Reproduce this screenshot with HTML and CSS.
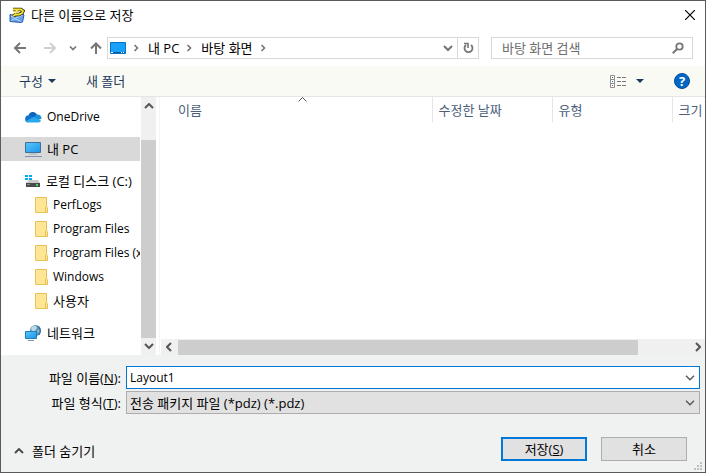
FILE: index.html
```html
<!DOCTYPE html>
<html lang="ko">
<head>
    <meta charset="UTF-8">
    <meta name="viewport" content="width=device-width, initial-scale=1.0">
    <title>다른 이름으로 저장</title>
    <link rel="stylesheet" href="styles.css">
</head>
<body>
    <!-- 공용 아이콘 -->
    <svg class="symbols" aria-hidden="true">
        <symbol id="folder" viewBox="0 0 13 16">
            <path d="M.5.5h11v9l1 1v5H.5z" fill="#ffe697" stroke="#e8c251"/>
            <path d="M10.500 15v-4.500l1-1.500" fill="none" stroke="#e8c251"/>
        </symbol>
        <symbol id="chevron-right" viewBox="0 0 6 8">
            <path d="M1.500 1L4.500 4 1.500 7" fill="none" stroke="currentColor" stroke-width="1.600"/>
        </symbol>
        <symbol id="chevron-down" viewBox="0 0 10 6">
            <path d="M1 .8L5 4.800 9 .8" fill="none" stroke="currentColor" stroke-width="1.300"/>
        </symbol>
        <symbol id="arrow" viewBox="0 0 14 12">
            <path d="M7 1L2 6l5 5M2 6h11" fill="none" stroke="currentColor" stroke-width="2"/>
        </symbol>
        <symbol id="triangle" viewBox="0 0 8 4">
            <path d="M0 0h8L4 4z" fill="#1e395b"/>
        </symbol>
        <linearGradient id="screen" x1="0" y1="0" x2="1" y2="1">
            <stop offset="0" stop-color="#59c8ff"/>
            <stop offset="1" stop-color="#1b94e8"/>
        </linearGradient>
    </svg>

    <div class="dialog">
        <header class="title-bar">
            <svg class="app-icon" width="16" height="16" viewBox="0 0 16 16">
                <path d="M1 7.500l4 1 9-1.500 1 1-1.500 7-1 .5L1 14.500z" fill="#6ba3ea" stroke="#2257a8"/>
                <path d="M2 9l4 2.500L13.500 8M2.500 13.500L6 11.500l5.500 3" fill="none" stroke="#bcdafb"/>
                <path d="M4 2.500h8l2 1.500-1 2-3 1.500H7L4 9" fill="none" stroke="#2f2c12" stroke-width="3.600"/>
                <path d="M4 2.500h8l2 1.500-1 2-3 1.500H7L4 9" fill="none" stroke="#fbe62e" stroke-width="1.800"/>
                <path d="M8.500 2.500L6 6.500" stroke="#fbe62e" stroke-width="1.600"/>
            </svg>
            <h1>다른 이름으로 저장</h1>
            <button class="close-button" type="button" aria-label="닫기">
                <svg width="10" height="10" viewBox="0 0 10 10"><path d="M0 0l10 10M10 0L0 10" stroke="#000" stroke-width="1.200"/></svg>
            </button>
        </header>

        <nav class="nav-bar">
            <div class="history">
                <button type="button" aria-label="뒤로"><svg width="14" height="12"><use href="#arrow"/></svg></button>
                <button type="button" class="faded" aria-label="앞으로"><svg class="flip" width="14" height="12"><use href="#arrow"/></svg></button>
                <button type="button" class="recent" aria-label="최근 위치"><svg width="8" height="5" viewBox="0 0 8 5"><path d="M1 .5l3 3 3-3" fill="none" stroke="currentColor" stroke-width="1.600"/></svg></button>
                <button type="button" aria-label="위로"><svg width="12" height="12" viewBox="0 0 12 12"><path d="M1 6.500l5-5 5 5M6 2v10" fill="none" stroke="currentColor" stroke-width="2"/></svg></button>
            </div>
            <div class="address">
                <svg width="16" height="12" viewBox="0 0 16 12">
                    <path d="M.5.5h15v11H.5z" fill="#18a0fa" stroke="#0874c1"/>
                    <path d="M1 10.500h14" stroke="#065a9a"/>
                    <path d="M1 10.500h2M11 10.500h1M13 10.500h1" stroke="#fff"/>
                </svg>
                <svg class="step" width="6" height="8"><use href="#chevron-right"/></svg>
                <a href="#pc">내 PC</a>
                <svg class="step" width="6" height="8"><use href="#chevron-right"/></svg>
                <a href="#desktop">바탕 화면</a>
                <svg class="step" width="6" height="8"><use href="#chevron-right"/></svg>
                <button type="button" class="previous" aria-label="이전 위치"><svg width="10" height="7" viewBox="0 0 10 7"><path d="M1 1l4 4 4-4" fill="none" stroke="currentColor" stroke-width="2"/></svg></button>
                <button type="button" class="refresh" aria-label="새로 고침">
                    <svg width="11" height="12" viewBox="0 0 11 12"><path d="M8 3a4 4 0 1 1-5 0" fill="none" stroke="currentColor" stroke-width="1.800"/><path d="M1 1.500h4V6" fill="none" stroke="currentColor" stroke-width="1.600"/></svg>
                </button>
            </div>
            <div class="search">
                <input type="text" placeholder="바탕 화면 검색" aria-label="바탕 화면 검색">
                <svg width="12" height="12" viewBox="0 0 12 12"><circle cx="7.500" cy="4.500" r="3.200" fill="none" stroke="#757575" stroke-width="1.800"/><path d="M5.200 6.800L.8 11.200" stroke="#757575" stroke-width="2"/></svg>
            </div>
        </nav>

        <div class="toolbar">
            <button type="button">구성 <svg width="8" height="4"><use href="#triangle"/></svg></button>
            <button type="button">새 폴더</button>
            <button type="button" class="view-button" aria-label="보기 변경">
                <svg width="17" height="13" viewBox="0 0 17 13">
                    <path d="M.5.5h4v12h-4zM.5 4.500h4M.5 8.500h4" fill="#fff" stroke="#8f8f8f"/>
                    <path d="M2 2.500h1" stroke="#555"/>
                    <path d="M2 6.500h1" stroke="#1979ca"/>
                    <path d="M2 10.500h1" stroke="#d13438"/>
                    <path d="M7 2.500h4M12 2.500h4M7 6.500h4M12 6.500h4M7 10.500h4M12 10.500h4" stroke="#777"/>
                </svg>
                <svg width="8" height="4"><use href="#triangle"/></svg>
            </button>
            <button type="button" class="help-button" aria-label="도움말">?</button>
        </div>

        <main class="content">
            <div class="tree">
                <ul class="tree-list">
                    <li class="tree-item latin">
                        <svg width="17" height="12" viewBox="0 0 17 12">
                            <path d="M3.500 5A4.500 4.500 0 0 1 12 3.500L9 8z" fill="#0b62b8"/>
                            <path d="M3.800 4.200c2 0 3 .8 4.600 1.900L3 11.500A3.700 3.700 0 0 1 3.800 4.200z" fill="#1272cc"/>
                            <path d="M12 3.500a4 4 0 0 1 4.500 4.200L13 9 8 6z" fill="#1690df"/>
                            <path d="M1 10l7.500-4L16 9.500a3 3 0 0 1-2.500 2H3.500Q2 11.500 1 10z" fill="#28a8ea"/>
                        </svg>
                        OneDrive
                    </li>
                    <li class="tree-item group selected">
                        <svg width="17" height="15" viewBox="0 0 17 15">
                            <path d="M.5.500h15v10H.5z" fill="url(#screen)" stroke="#426f94"/>
                            <path d="M4 12h8" stroke="#9fb1c0"/>
                            <path d="M0 14.500h17" stroke="#8095ad"/>
                        </svg>
                        내 PC
                    </li>
                    <li class="tree-item group">
                        <svg width="16" height="14" viewBox="0 0 16 14">
                            <path d="M0 1h3v2H0zM4 1h3v2H4zM0 4h3v2H0zM4 4h3v2H4z" fill="#00adef"/>
                            <path d="M3 7l1-1h9l2 3H1z" fill="#c9c9c9"/>
                            <path d="M1 9h14v4H1z" fill="#4a4a4a"/>
                            <path d="M2 10h3v1H2z" fill="#888"/>
                            <path d="M11 10h2v2h-2z" fill="#38e070"/>
                        </svg>
                        로컬 디스크 (C:)
                    </li>
                    <li class="tree-item child latin"><svg width="13" height="16"><use href="#folder"/></svg>PerfLogs</li>
                    <li class="tree-item child latin"><svg width="13" height="16"><use href="#folder"/></svg>Program Files</li>
                    <li class="tree-item child latin"><svg width="13" height="16"><use href="#folder"/></svg>Program Files (x86)</li>
                    <li class="tree-item child latin"><svg width="13" height="16"><use href="#folder"/></svg>Windows</li>
                    <li class="tree-item child"><svg width="13" height="16"><use href="#folder"/></svg>사용자</li>
                    <li class="tree-item group">
                        <svg width="17" height="16" viewBox="0 0 17 16">
                            <circle cx="10.500" cy="5.500" r="5.500" fill="#5c8fb5"/>
                            <path d="M6 3q2-3 5-2l1 2-2 3-3 1z" fill="#b9d9e8"/>
                            <path d="M12 6l2-2q1 3-1 4z" fill="#8fbcd6"/>
                            <path d="M13 1q4 4 1 9" fill="none" stroke="#29679b"/>
                            <path d="M.5 6.500h11v7H.5z" fill="url(#screen)" stroke="#277bb0"/>
                            <path d="M3 15.500h6" stroke="#6f9ab8"/>
                        </svg>
                        네트워크
                    </li>
                </ul>
                <div class="scrollbar vertical">
                    <svg class="flip-y" width="10" height="6" viewBox="0 0 10 6"><path d="M1 1l4 4 4-4" fill="none" stroke="currentColor" stroke-width="2"/></svg>
                    <span class="thumb"></span>
                    <svg width="10" height="6" viewBox="0 0 10 6"><path d="M1 1l4 4 4-4" fill="none" stroke="currentColor" stroke-width="2"/></svg>
                </div>
            </div>

            <div class="files">
                <table class="file-table">
                    <thead>
                        <tr>
                            <th class="name">이름<svg class="sort" width="9" height="5" viewBox="0 0 9 5"><path d="M.5 4.500l4-4 4 4" fill="none" stroke="#555"/></svg></th>
                            <th class="date">수정한 날짜</th>
                            <th class="type">유형</th>
                            <th class="size">크기</th>
                        </tr>
                    </thead>
                </table>
                <div class="scrollbar horizontal">
                    <svg width="6" height="10" viewBox="0 0 6 10"><path d="M5 1L1 5l4 4" fill="none" stroke="currentColor" stroke-width="2"/></svg>
                    <span class="thumb"></span>
                    <svg width="6" height="10" viewBox="0 0 6 10"><path d="M1 1l4 4-4 4" fill="none" stroke="currentColor" stroke-width="2"/></svg>
                </div>
            </div>
        </main>

        <form class="footer">
            <div class="fields">
                <label for="filename">파일 이름(<u>N</u>):</label>
                <div class="combo focused">
                    <input type="text" id="filename" class="latin" value="Layout1">
                    <svg width="10" height="6"><use href="#chevron-down"/></svg>
                </div>
                <label for="filetype">파일 형식(<u>T</u>):</label>
                <div class="combo">
                    <select id="filetype">
                        <option>전송 패키지 파일 (*pdz) (*.pdz)</option>
                    </select>
                    <svg width="10" height="6"><use href="#chevron-down"/></svg>
                </div>
            </div>
            <div class="actions">
                <button type="button" class="hide-folders">
                    <svg width="10" height="6" viewBox="0 0 10 6"><path d="M1 5l4-4 4 4" fill="none" stroke="#444" stroke-width="1.800"/></svg>
                    폴더 숨기기
                </button>
                <button type="button" class="button primary">저장(<u>S</u>)</button>
                <button type="button" class="button">취소</button>
            </div>
            <svg class="grip" width="8" height="8" viewBox="0 0 8 8"><path d="M6 0h2v2H6zM3 3h2v2H3zM6 3h2v2H6zM0 6h2v2H0zM3 6h2v2H3zM6 6h2v2H6z" fill="#bfbfbf"/></svg>
        </form>
    </div>
</body>
</html>
```

FILE: styles.css
```css
* {
    box-sizing: border-box;
}
body {
    margin: 0;
    font-family: "Open Sans", "Noto Sans CJK KR", sans-serif;
    font-size: 13px;
    line-height: 20px;
    color: #000;
}
button, input, select {
    font: inherit;
    color: inherit;
    margin: 0;
    padding: 0;
    border: none;
    border-radius: 0;
    background: none;
    outline: none;
}
svg {
    display: block;
    flex: none;
}
.symbols {
    position: absolute;
    width: 0;
    height: 0;
}
.latin {
    font-size: 12px;
}
.flip {
    transform: scaleX(-1);
}
.flip-y {
    transform: scaleY(-1);
}
.dialog {
    display: flex;
    flex-direction: column;
    min-height: 100vh;
    border: 1px solid #5a5a5c;
    background-color: #fff;
}

/* 제목 표시줄 */
.title-bar {
    display: flex;
    align-items: center;
    height: 28px;
    padding: 0 10px 0 8px;
}
.title-bar h1 {
    flex: 1;
    margin: 0 0 0 6px;
    font-size: 13px;
    font-weight: normal;
}

/* 탐색 줄 */
.nav-bar {
    display: flex;
    align-items: center;
    gap: 12px;
    padding: 8px 12px 7px;
}
.history {
    display: flex;
    align-items: center;
    gap: 16px;
    width: 82px;
    color: #757575;
}
.history .faded {
    color: #d0d0d0;
}
.history .recent {
    margin: 0 -3px 0 -4px;
}
.address {
    display: flex;
    flex: 1;
    align-items: center;
    height: 22px;
    padding-left: 2px;
    border: 1px solid #d9d9d9;
    color: #757575;
}
.address a {
    color: #000;
    text-decoration: none;
}
.address .step {
    margin: 0 9px 0 7px;
}
.address .previous {
    margin-left: auto;
    padding-right: 4px;
}
.refresh {
    display: flex;
    align-items: center;
    justify-content: center;
    width: 21px;
    height: 20px;
    border-left: 1px solid #d9d9d9;
}
.search {
    display: flex;
    align-items: center;
    width: 202px;
    height: 22px;
    padding: 0 8px 0 10px;
    border: 1px solid #d9d9d9;
}
.search input {
    flex: 1;
    min-width: 0;
}
.search input::placeholder {
    color: #6d6d6d;
    opacity: 1;
}

/* 도구 모음 */
.toolbar {
    display: flex;
    align-items: center;
    gap: 30px;
    height: 31px;
    padding: 0 15px 0 18px;
    border-bottom: 1px solid #e5e5e5;
    background-color: #f9faf4;
    color: #1e395b;
}
.toolbar button {
    display: flex;
    align-items: center;
    gap: 5px;
}
.toolbar .view-button {
    gap: 9px;
    margin-left: auto;
}
.toolbar .help-button {
    justify-content: center;
    width: 16px;
    height: 16px;
    border: 1px solid #004e9a;
    border-radius: 50%;
    background-color: #0067c5;
    color: #fff;
    font-weight: bold;
}

/* 폴더 트리 */
.content {
    display: flex;
    flex: 1;
}
.tree {
    display: flex;
    width: 159px;
    padding-right: 3px;
    border-right: 1px solid #f5f5f5;
}
.tree-list {
    flex: 1;
    min-width: 0;
    margin: 0;
    padding: 8px 1px 0 0;
    list-style: none;
}
.tree-item {
    display: flex;
    align-items: center;
    gap: 5px;
    height: 24px;
    padding-left: 24px;
    overflow: hidden;
    white-space: nowrap;
}
.tree-item.group {
    margin-top: 8px;
}
.tree-item.child {
    padding-left: 34px;
}
.tree-item.selected {
    background-color: #d9d9d9;
}

/* 스크롤 막대 */
.scrollbar {
    display: flex;
    align-items: center;
    background-color: #f0f0f0;
    color: #555;
}
.scrollbar .thumb {
    background-color: #cdcdcd;
}
.vertical {
    flex-direction: column;
    width: 15px;
    padding: 6px 0;
}
.vertical .thumb {
    flex: 1;
    width: 15px;
    margin: 31px 0 5px;
}
.horizontal {
    gap: 6px;
    height: 16px;
    padding: 0 4px 0 5px;
}
.horizontal .thumb {
    width: 86%;
    height: 15px;
}
.horizontal svg:last-child {
    margin-left: auto;
}

/* 파일 목록 */
.files {
    display: flex;
    flex: 1;
    flex-direction: column;
    justify-content: space-between;
    min-width: 0;
    padding-left: 1px;
}
.file-table {
    width: 100%;
    table-layout: fixed;
    border-collapse: collapse;
}
.file-table th {
    position: relative;
    height: 25px;
    padding: 0 0 0 6px;
    border-right: 1px solid #e5e5e5;
    color: #4c607a;
    font-weight: normal;
    text-align: left;
    white-space: nowrap;
}
.file-table .name {
    width: 271px;
    padding-left: 17px;
}
.file-table .date,
.file-table .type {
    width: 120px;
}
.file-table .size {
    border-right: none;
}
.sort {
    position: absolute;
    top: 0;
    left: 137px;
}

/* 하단 */
.footer {
    position: relative;
    padding: 11px 5px;
    background-color: #f0f2f1;
}
.fields {
    display: grid;
    grid-template-columns: 115px 1fr;
    gap: 2px 5px;
    align-items: center;
}
.fields label {
    text-align: right;
}
.combo {
    position: relative;
    height: 23px;
    border: 1px solid #adadad;
    background-color: #e1e1e1;
    color: #000;
}
.combo.focused {
    border-color: #0078d7;
    background-color: #fff;
}
.combo input,
.combo select {
    display: block;
    width: 100%;
    height: 21px;
    padding: 0 20px 0 3px;
    appearance: none;
}
.combo svg {
    position: absolute;
    top: 8px;
    right: 4px;
    color: #555;
    pointer-events: none;
}
.actions {
    display: flex;
    align-items: center;
    gap: 14px;
    padding: 23px 13px 0 8px;
}
.hide-folders {
    display: flex;
    align-items: center;
    gap: 8px;
    margin: 4px auto 0 0;
}
.button {
    width: 86px;
    height: 24px;
    border: 1px solid #adadad;
    background-color: #e1e1e1;
    line-height: 18px;
}
.button.primary {
    border: 2px solid #0078d7;
}
.grip {
    position: absolute;
    right: 3px;
    bottom: 2px;
}
```
